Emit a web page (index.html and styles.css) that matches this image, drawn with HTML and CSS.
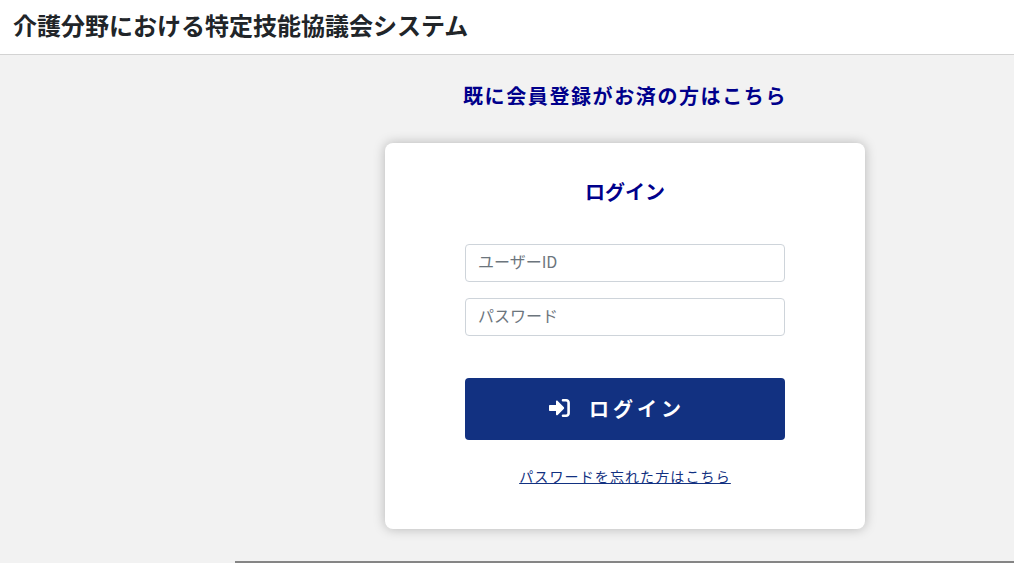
FILE: index.html
```html
<!DOCTYPE html>
<html lang="ja">
  <head>
    <meta charset="UTF-8" />
    <meta name="viewport" content="width=device-width, initial-scale=1.0" />
    <title>介護分野における特定技能協議会システム</title>
    <link rel="stylesheet" href="styles.css">
  </head>
  <body>
    <header class="header">
      <h1 class="header-title">介護分野における特定技能協議会システム</h1>
    </header>
    <main class="main">
      <section class="login">
        <h2 class="login-lead">既に会員登録がお済の方はこちら</h2>
        <form class="login-card">
          <h3 class="login-title">ログイン</h3>
          <input class="form-control" type="text" name="user" placeholder="ユーザーID" aria-label="ユーザーID" />
          <input class="form-control" type="password" name="password" placeholder="パスワード" aria-label="パスワード" />
          <button class="login-button" type="submit">
            <svg class="login-icon" viewBox="0 0 22 20" aria-hidden="true">
              <path d="M1 7h6V3.6c0-1 1-1.4 1.7-.7l6 6c.6.6.6 1.5 0 2.1l-6 6c-.7.7-1.7.2-1.7-.7V13H1c-.6 0-1-.4-1-1V8c0-.6.4-1 1-1z" />
              <path class="login-icon-door" d="M14 2.3h3.2a2.4 2.4 0 0 1 2.4 2.4v10.6a2.4 2.4 0 0 1-2.4 2.4H14" />
            </svg>
            <span>ログイン</span>
          </button>
          <a class="login-forgot" href="#">パスワードを忘れた方はこちら</a>
        </form>
      </section>
      <hr class="divider" />
    </main>
  </body>
</html>
```
FILE: styles.css
```css
* {
  box-sizing: border-box;
}
body {
  margin: 0;
  min-height: 100vh;
  font-family: "Noto Sans CJK JP", sans-serif;
  font-size: 16px;
  line-height: 24px;
  color: #212529;
  background-color: #f2f2f2;
}
h1,
h2,
h3 {
  margin: 0;
}
.header {
  padding: 7px 13px 11px;
  background-color: #fff;
  border-bottom: 1px solid #d3d3d3;
}
.header-title {
  font-size: 24px;
  line-height: 36px;
}
.main {
  padding-left: 235px;
}
.login {
  display: flex;
  flex-direction: column;
  align-items: center;
  padding: 29px 0 32px 1px;
}
.login-lead {
  margin-bottom: 35px;
  font-size: 20px;
  line-height: 24px;
  letter-spacing: 0.08em;
  color: darkblue;
}
.login-card {
  display: flex;
  flex-direction: column;
  width: 100%;
  max-width: 480px;
  padding: 37px 80px 41px;
  background-color: #fff;
  border-radius: 8px;
  box-shadow: 0 0 12px rgba(0, 0, 0, 0.25);
}
.login-title {
  margin-bottom: 40px;
  font-size: 20px;
  line-height: 24px;
  text-align: center;
  color: darkblue;
}
.form-control {
  width: 100%;
  height: 38px;
  margin: 0 0 16px;
  padding: 4px 12px 8px;
  font: inherit;
  color: #495057;
  background-color: #fff;
  border: 1px solid #ced4da;
  border-radius: 4px;
}
.form-control::placeholder {
  color: #6c757d;
}
.login-button {
  display: flex;
  justify-content: center;
  align-items: center;
  gap: 18px;
  height: 62px;
  margin: 26px 0 24px;
  padding: 0 32px 2px 16px;
  font-family: inherit;
  font-size: 20px;
  font-weight: bold;
  letter-spacing: 0.2em;
  color: #fff;
  background-color: #123181;
  border: none;
  border-radius: 4px;
  cursor: pointer;
}
.login-icon {
  width: 22px;
  height: 20px;
  fill: currentColor;
}
.login-icon-door {
  fill: none;
  stroke: currentColor;
  stroke-width: 2.6;
  stroke-linecap: round;
}
.login-forgot {
  align-self: center;
  font-size: 14px;
  line-height: 24px;
  letter-spacing: 0.08em;
  color: #123181;
}
.divider {
  height: 2px;
  margin: 0;
  background-color: #858585;
  border: none;
}
```
